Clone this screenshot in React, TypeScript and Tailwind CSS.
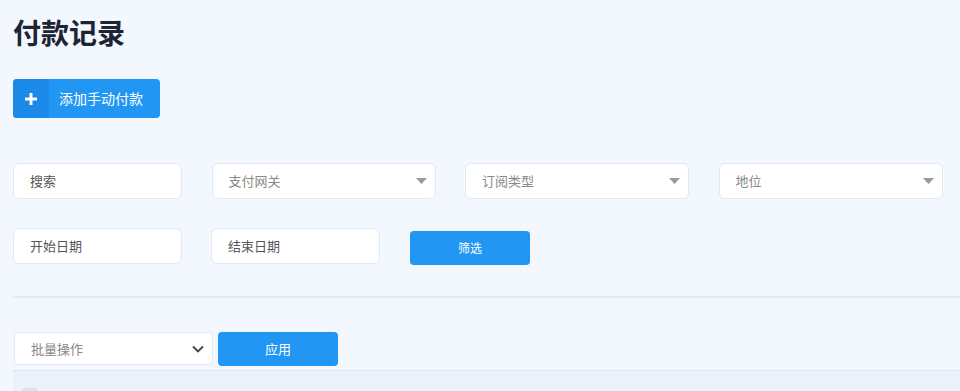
const font = { fontFamily: '"Noto Sans CJK SC", "Noto Sans", sans-serif' };

function Caret() {
  return (
    <svg width="11" height="6" viewBox="0 0 11 6" className="shrink-0">
      <path d="M0 0h11L5.5 6z" fill="#9a9a9a" />
    </svg>
  );
}

function TextField({ label, width }: { label: string; width: string }) {
  return (
    <div
      className={`${width} flex h-[36px] items-center rounded-[6px] border border-[#e2e8f5] bg-white pl-[16px] text-[13px] text-[#555]`}
    >
      {label}
    </div>
  );
}

function SelectField({ label }: { label: string }) {
  return (
    <div className="flex h-[36px] w-[224px] items-center justify-between rounded-[6px] border border-[#e2e8f5] bg-white pl-[16px] pr-[8px] text-[13px] text-[#888]">
      <span>{label}</span>
      <Caret />
    </div>
  );
}

export default function App() {
  return (
    <div className="h-[391px] w-full overflow-hidden bg-[#f3f7fe] pl-[13px]" style={font}>
      <h1 className="mt-[15px] h-[34px] text-[28px] font-bold leading-[34px] text-[#1d2433]">付款记录</h1>

      <button className="mt-[30px] flex h-[39px] w-[147px] items-stretch overflow-hidden rounded-[4px] bg-[#2196f3] text-white">
        <span className="flex w-[36px] items-center justify-center bg-[#1a89e7]">
          <svg width="12" height="12" viewBox="0 0 12 12">
            <path d="M4.5 0h3v4.5H12v3H7.5V12h-3V7.5H0v-3h4.5z" fill="#fff" />
          </svg>
        </span>
        <span className="flex items-center pl-[10px] text-[14px]">添加手动付款</span>
      </button>

      <div className="mt-[45px] flex gap-[29.5px]">
        <TextField label="搜索" width="w-[169px]" />
        <SelectField label="支付网关" />
        <SelectField label="订阅类型" />
        <SelectField label="地位" />
      </div>

      <div className="mt-[29px] flex items-start gap-[29px]">
        <TextField label="开始日期" width="w-[169px]" />
        <TextField label="结束日期" width="w-[169px]" />
        <button className="ml-[1px] mt-[3px] flex h-[34px] w-[120px] items-center justify-center rounded-[4px] bg-[#2196f3] text-[12px] text-white">
          筛选
        </button>
      </div>

      <div className="mt-[31px] h-[2px] bg-[#e3e8f4]" />

      <div className="mt-[34px] flex items-start gap-[5px] pl-[1px]">
        <div className="flex h-[33px] w-[199px] items-center justify-between rounded-[4px] border border-[#e2e8f5] bg-white pl-[16px] pr-[8px] text-[13px] text-[#888]">
          <span>批量操作</span>
          <svg width="12" height="8" viewBox="0 0 12 8" className="shrink-0">
            <path d="M1 1.5l5 5 5-5" fill="none" stroke="#444" strokeWidth="1.8" />
          </svg>
        </div>
        <button className="flex h-[34px] w-[120px] items-center justify-center rounded-[4px] bg-[#2196f3] text-[13px] text-white">
          应用
        </button>
      </div>

      <div className="mt-[4px] h-[21px] border-t border-[#dfe5f2] bg-[#ebf2fc] pl-[9px] pt-[17px]">
        <div className="h-[14px] w-[16px] rounded-[3px] bg-[#dde3ec]" />
      </div>
    </div>
  );
}
